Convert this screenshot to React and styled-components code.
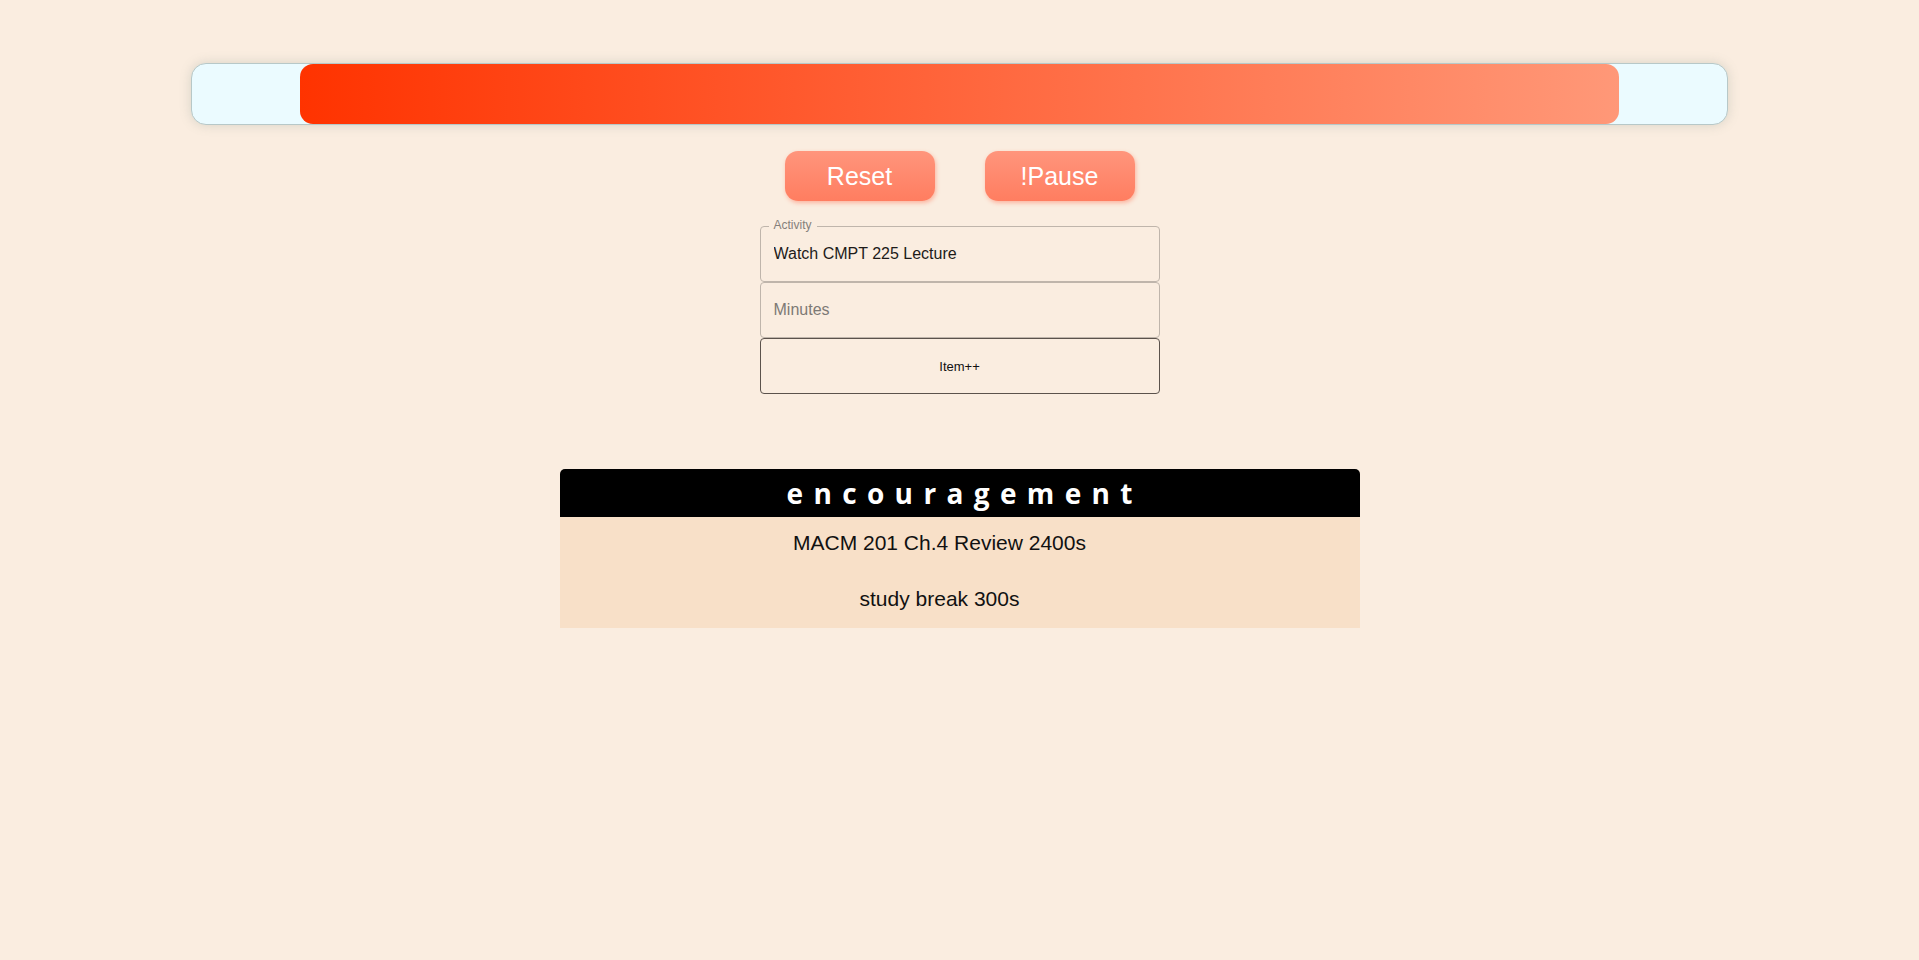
import React, { useState } from "react";
import styled, { createGlobalStyle } from "styled-components";

const GlobalStyle = createGlobalStyle`
  * {
    box-sizing: border-box;
  }
  body {
    margin: 0;
    background: #faede0;
    font-family: "Liberation Sans", Arial, sans-serif;
  }
`;

const items = [
  { name: "MACM 201 Ch.4 Review", seconds: 2400 },
  { name: "study break", seconds: 300 },
];

const App = () => {
  const [remaining] = useState(0.859);
  const [activity, setActivity] = useState("Watch CMPT 225 Lecture");
  const [minutes, setMinutes] = useState("");

  return (
    <Wrapper>
      <GlobalStyle />
      <Track>
        <Fill style={{ width: `${remaining * 100}%` }} />
      </Track>

      <Controls>
        <PillButton>Reset</PillButton>
        <PillButton>!Pause</PillButton>
      </Controls>

      <Form onSubmit={(e) => e.preventDefault()}>
        <Field>
          <Input value={activity} onChange={(e) => setActivity(e.target.value)} />
          <Outline>
            <Legend>
              <span>Activity</span>
            </Legend>
          </Outline>
        </Field>
        <Field>
          <Input
            placeholder="Minutes"
            value={minutes}
            onChange={(e) => setMinutes(e.target.value)}
          />
          <Outline>
            <Legend />
          </Outline>
        </Field>
        <AddButton type="submit">Item++</AddButton>
      </Form>

      <Board>
        <BoardHead>encouragement</BoardHead>
        <BoardBody>
          {items.map((item) => (
            <Entry key={item.name}>
              {item.name} {item.seconds}s
            </Entry>
          ))}
        </BoardBody>
      </Board>
    </Wrapper>
  );
};

const Wrapper = styled.main`
  min-height: 100vh;
  padding-top: 63px;
  display: flex;
  flex-direction: column;
  align-items: center;
`;

const Track = styled.div`
  width: 1537px;
  height: 62px;
  display: flex;
  justify-content: center;
  background: #ebfbff;
  border: 1px solid #b7c8c8;
  border-radius: 15px;
  box-shadow: 0 0 12px rgba(90, 120, 110, 0.22);
`;

const Fill = styled.div`
  height: 100%;
  border-radius: 13px;
  background: linear-gradient(to right, #ff3300, #ff9878);
`;

const Controls = styled.div`
  margin-top: 26px;
  display: flex;
  gap: 50px;
`;

const PillButton = styled.button`
  width: 150px;
  height: 50px;
  border: none;
  border-radius: 13px;
  background: linear-gradient(to bottom, #ff957c, #ff7d60);
  box-shadow: 1px 2px 4px rgba(255, 110, 80, 0.45);
  color: #fff;
  font-family: "Liberation Sans", Arial, sans-serif;
  font-size: 25px;
  cursor: pointer;
`;

const Form = styled.form`
  margin-top: 25px;
  width: 400px;
  display: flex;
  flex-direction: column;
`;

const Field = styled.div`
  position: relative;
  height: 56px;
`;

const Input = styled.input`
  width: 100%;
  height: 56px;
  padding: 16.5px 14px;
  border: none;
  outline: none;
  background: transparent;
  color: #1d1b19;
  font-family: "Liberation Sans", Arial, sans-serif;
  font-size: 16px;
  &::placeholder {
    color: #7d7975;
    opacity: 1;
  }
`;

const Outline = styled.fieldset`
  position: absolute;
  inset: -5px 0 0;
  margin: 0;
  padding: 0 8px;
  border: 1px solid #bfb5ab;
  border-radius: 4px;
  pointer-events: none;
`;

const Legend = styled.legend`
  height: 11px;
  padding: 0;
  font-size: 12px;
  line-height: 9px;
  color: #85807b;
  span {
    padding: 0 5px;
  }
`;

const AddButton = styled.button`
  height: 56px;
  border: 1px solid #5b524c;
  border-radius: 4px;
  background: transparent;
  color: #111;
  font-family: "Liberation Sans", Arial, sans-serif;
  font-size: 13px;
  cursor: pointer;
`;

const Board = styled.section`
  margin-top: 75px;
  width: 800px;
`;

const BoardHead = styled.h2`
  margin: 0;
  height: 48px;
  display: flex;
  align-items: center;
  justify-content: center;
  background: #000;
  border-radius: 5px 5px 0 0;
  color: #fff;
  font-family: "Open Sans", sans-serif;
  font-weight: 700;
  font-size: 28px;
  letter-spacing: 0.37em;
  text-indent: 0.37em;
`;

const BoardBody = styled.div`
  padding: 14px 40px 17px 0;
  display: flex;
  flex-direction: column;
  gap: 32px;
  background: #f8e0c8;
`;

const Entry = styled.p`
  margin: 0;
  text-align: center;
  color: #111;
  font-size: 21px;
  line-height: 24px;
`;

export default App;
